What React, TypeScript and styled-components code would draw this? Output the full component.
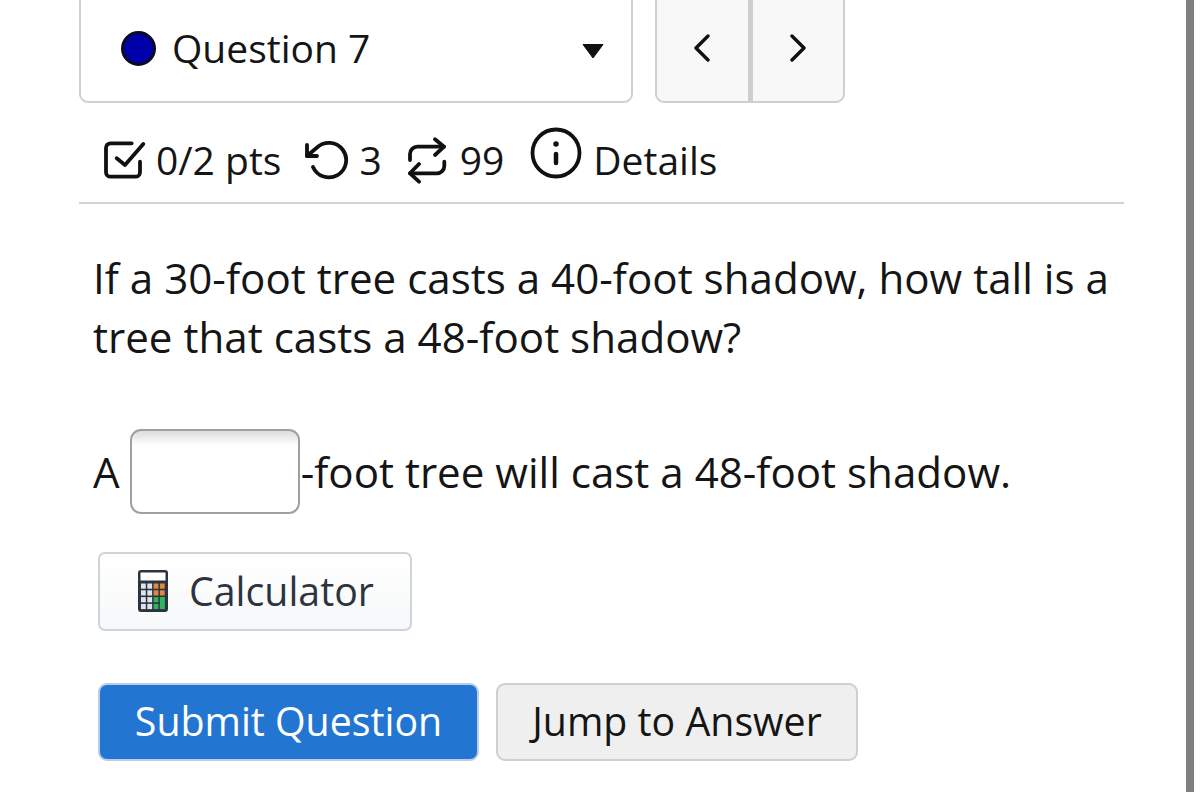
import React from "react";
import styled, { createGlobalStyle } from "styled-components";

const Global = createGlobalStyle`
  html, body { margin: 0; padding: 0; background: #fff; height: 792px; overflow: hidden; }
  body { font-family: "Open Sans", "Noto Sans", sans-serif; color: #151515; }
`;
const Page = styled.div`
  display: flex;
  width: 1200px;
  height: 792px;
  overflow: hidden;
`;
const Content = styled.main`
  width: 1045px;
  margin-left: 79px;
  margin-top: -8px;
`;
const Scrollbar = styled.div`
  width: 8px;
  height: 792px;
  margin-left: 62px;
  background: #808080;
`;
const TopRow = styled.div`
  display: flex;
  gap: 22px;
`;
const Select = styled.div`
  box-sizing: border-box;
  width: 554px;
  height: 111px;
  border: 2.5px solid #cfcfcf;
  border-radius: 9px;
  display: flex;
  align-items: center;
  padding: 0 27px 0 40px;
  font-size: 39px;
  background: #fff;
`;
const Dot = styled.span`
  box-sizing: border-box;
  width: 35px;
  height: 35px;
  margin-top: 2px;
  border-radius: 50%;
  background: #0000a8;
  border: 3px solid #0a0a20;
  margin-right: 16px;
`;
const SelectLabel = styled.span`
  flex: 1;
  line-height: 52px;
`;
const Caret = styled.svg`
  margin-top: 6px;
`;
const NavGroup = styled.div`
  box-sizing: border-box;
  width: 190px;
  height: 111px;
  border: 2.5px solid #cfcfcf;
  border-radius: 9px;
  background: #f8f8f8;
  display: flex;
`;
const NavButton = styled.div<{ $divider?: boolean }>`
  flex: 1;
  display: flex;
  align-items: center;
  justify-content: center;
  border-left: ${(p) => (p.$divider ? "5px solid #cfcfcf" : "none")};
`;
const MetaRow = styled.div`
  display: flex;
  align-items: center;
  box-sizing: border-box;
  height: 100.5px;
  padding: 15px 0 0 24px;
  border-bottom: 2.5px solid #d4d4d4;
  font-size: 39px;
`;
const MetaItem = styled.span<{ $gap: number; $left?: number }>`
  display: inline-flex;
  align-items: center;
  gap: ${(p) => p.$gap}px;
  margin-left: ${(p) => p.$left ?? 0}px;
`;
const MetaIcon = styled.svg<{ $lift?: number }>`
  fill: none;
  stroke: #111;
  stroke-width: 3.8;
  stroke-linecap: round;
  stroke-linejoin: round;
  margin-bottom: ${(p) => p.$lift ?? 0}px;
`;
const Question = styled.p`
  margin: 44.5px 0 0 14px;
  font-size: 42.12px;
  line-height: 59px;
  width: 1025px;
`;
const AnswerRow = styled.div`
  display: flex;
  align-items: center;
  margin: 63px 0 0 14px;
  font-size: 42.1px;
  height: 85px;
`;
const Blank = styled.div`
  box-sizing: border-box;
  width: 170px;
  height: 85px;
  margin: 0 1px 0 10px;
  border: 2.5px solid #a0a0a0;
  border-radius: 11px;
  background: linear-gradient(#dcdcdc 0, #fff 14px);
`;
const CalcButton = styled.div`
  box-sizing: border-box;
  width: 314px;
  height: 79px;
  margin: 38px 0 0 19px;
  padding: 0 0 1px 37px;
  border: 2.5px solid #ccd4dc;
  border-radius: 7px;
  background: linear-gradient(#fff, #f7f8f9);
  display: flex;
  align-items: center;
  gap: 20px;
  font-size: 39.3px;
  color: #2c3440;
`;
const ButtonRow = styled.div`
  display: flex;
  gap: 17px;
  margin: 52px 0 0 19px;
`;
const Submit = styled.div`
  box-sizing: border-box;
  width: 381px;
  height: 78px;
  padding-bottom: 2px;
  border: 2.5px solid #b7cde8;
  border-radius: 9px;
  background: #2276d2;
  color: #fff;
  font-size: 39.3px;
  display: flex;
  align-items: center;
  justify-content: center;
`;
const Jump = styled(Submit)`
  width: 362px;
  border-color: #cfcfcf;
  background: #efefef;
  color: #151515;
`;

const Calc = () => (
  <svg width="32" height="44" viewBox="0 0 32 44">
    <rect x="1" y="1" width="30" height="42" rx="3" fill="#2c3340" />
    <rect x="3.5" y="3.5" width="25" height="8" fill="#fff" />
    {[0, 1, 2, 3].flatMap((c) =>
      [0, 1, 2, 3].map((r) => {
        const color = c < 2 ? "#dfe3ea" : r < 2 ? "#e08a3c" : "#2fb35f";
        return <rect key={`${c}-${r}`} x={4 + c * 6.3} y={14.5 + r * 6.8} width="4.8" height="5.2" fill={color} />;
      })
    )}
    <rect x="22.9" y="28" width="4.8" height="12" fill="#2fb35f" />
  </svg>
);

const Chevron = ({ d }: { d: string }) => (
  <svg width="18" height="28" viewBox="0 0 18 28" fill="none" stroke="#111" strokeWidth="3.4" strokeLinecap="round" strokeLinejoin="round">
    <path d={d} />
  </svg>
);

export default function App() {
  return (
    <Page>
      <Global />
      <Content>
        <TopRow>
          <Select>
            <Dot />
            <SelectLabel>Question 7</SelectLabel>
            <Caret width="22" height="16" viewBox="0 0 22 16">
              <path d="M1 1.5 H21 L11 15 Z" fill="#111" stroke="#111" strokeLinejoin="round" />
            </Caret>
          </Select>
          <NavGroup>
            <NavButton>
              <Chevron d="M15 2 L3 14 L15 26" />
            </NavButton>
            <NavButton $divider>
              <Chevron d="M3 2 L15 14 L3 26" />
            </NavButton>
          </NavGroup>
        </TopRow>
        <MetaRow>
          <MetaItem $gap={9}>
            <MetaIcon width="44" height="40" viewBox="0 0 44 40">
              <path d="M28.7 3.3 H7.5 a4.5 4.5 0 0 0 -4.5 4.5 V32.2 a4.5 4.5 0 0 0 4.5 4.5 H32.5 a4.5 4.5 0 0 0 4.5 -4.5 V21.7" />
              <path d="M13.7 18.3 L22 25 L40.3 4" />
            </MetaIcon>
            0/2 pts
          </MetaItem>
          <MetaItem $left={22} $gap={10}>
            <MetaIcon width="46" height="44" viewBox="0 0 46 44">
              <path d="M4 7 V18 H14" />
              <path d="M4 18 L14 9.5 A17.3 17.3 0 1 1 10 29" />
            </MetaIcon>
            3
          </MetaItem>
          <MetaItem $left={23} $gap={11}>
            <MetaIcon width="44" height="48" viewBox="0 0 44 48">
              <path d="M5 24 V18 a7.3 7.3 0 0 1 7.3 -7.3 H39" />
              <path d="M30 3.3 L39 10.7 L30 19" />
              <path d="M39.3 25.7 V30 a7.3 7.3 0 0 1 -7.3 7.3 H5" />
              <path d="M14 28 L5 37.3 L14 45.7" />
            </MetaIcon>
            99
          </MetaItem>
          <MetaItem $left={26} $gap={11}>
            <MetaIcon width="52" height="52" viewBox="0 0 52 52" $lift={14}>
              <circle cx="26" cy="26" r="23.5" />
              <path d="M26 27 V36" strokeWidth="4.5" />
              <path d="M26 17 h.01" strokeWidth="5.5" />
            </MetaIcon>
            Details
          </MetaItem>
        </MetaRow>
        <Question>If a 30-foot tree casts a 40-foot shadow, how tall is a tree that casts a 48-foot shadow?</Question>
        <AnswerRow>
          A<Blank />-foot tree will cast a 48-foot shadow.
        </AnswerRow>
        <CalcButton>
          <Calc />
          Calculator
        </CalcButton>
        <ButtonRow>
          <Submit>Submit Question</Submit>
          <Jump>Jump to Answer</Jump>
        </ButtonRow>
      </Content>
      <Scrollbar />
    </Page>
  );
}
